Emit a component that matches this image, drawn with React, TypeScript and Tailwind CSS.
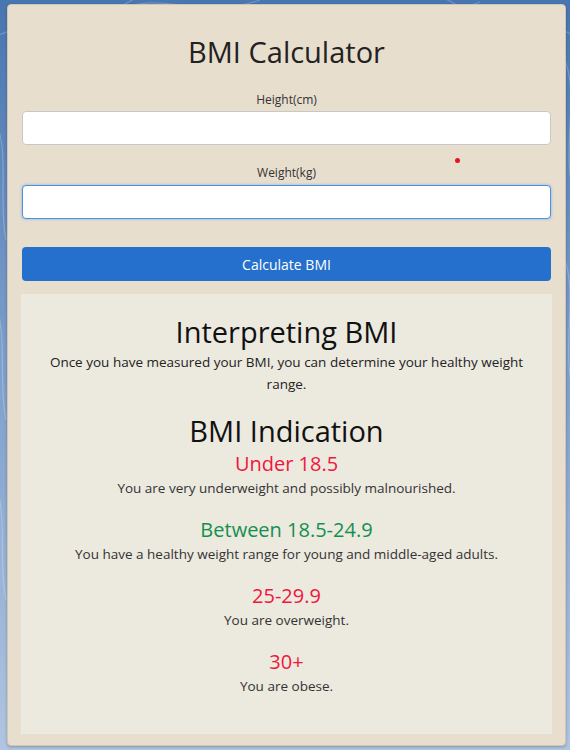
import { useState } from 'react';

type Range = { label: string; text: string; tone: 'bad' | 'good' };

const ranges: Range[] = [
  { label: 'Under 18.5', text: 'You are very underweight and possibly malnourished.', tone: 'bad' },
  { label: 'Between 18.5-24.9', text: 'You have a healthy weight range for young and middle-aged adults.', tone: 'good' },
  { label: '25-29.9', text: 'You are overweight.', tone: 'bad' },
  { label: '30+', text: 'You are obese.', tone: 'bad' },
];

const toneClass = {
  bad: 'text-[#f0173d]',
  good: 'text-[#13904f]',
};

// faint swirl lines on the page background
function Backdrop() {
  return (
    <svg className="absolute inset-0 h-full w-full" viewBox="0 0 570 750" preserveAspectRatio="none">
      <g fill="none" stroke="#ffffff" strokeOpacity="0.22" strokeWidth="1.2">
        <path d="M-10 40 C 40 10, 90 30, 140 -5" />
        <path d="M120 10 C 160 -10, 200 20, 260 0" />
        <path d="M300 12 C 360 -8, 420 25, 480 2" />
        <path d="M440 -5 C 490 30, 540 10, 580 40" />
        <path d="M-5 120 C 10 150, -2 200, 6 240" />
        <path d="M-5 300 C 8 340, -2 380, 6 420" />
        <path d="M565 60 C 580 100, 560 150, 575 200" />
        <path d="M565 260 C 578 300, 560 350, 575 400" />
        <path d="M-5 480 C 8 520, -2 560, 6 600" />
      </g>
    </svg>
  );
}

export default function App() {
  const [height, setHeight] = useState('');
  const [weight, setWeight] = useState('');

  return (
    <div
      className="relative min-h-screen w-full overflow-hidden bg-gradient-to-b from-[#4876b0] via-[#7fa0cc] to-[#b0c5e0] pt-[4px] pl-[7px]"
      style={{ fontFamily: '"Open Sans", "Noto Sans", sans-serif' }}
    >
      <Backdrop />
      <div className="relative flex h-[742px] w-[559px] flex-col rounded-[4px] border border-[#cfc6b8] bg-[#e8dece] px-[13px] pt-[29px] shadow-[0_1px_3px_rgba(0,0,0,0.25)]">
        <span className="absolute left-[447px] top-[153px] h-[5px] w-[5px] rounded-full bg-[#e8141c]" />

        <h1 className="text-center text-[29px] leading-[36px] font-normal text-[#222]">BMI Calculator</h1>

        <label className="mt-[21px] block text-center text-[12px] leading-[18px] text-[#333]">Height(cm)</label>
        <input
          value={height}
          onChange={(e) => setHeight(e.target.value)}
          className="mx-px mt-[2px] h-[34px] rounded-[4px] border border-[#c8c8c8] bg-white px-3 text-[14px] outline-none"
        />

        <label className="mt-[19px] block text-center text-[12px] leading-[18px] text-[#333]">Weight(kg)</label>
        <input
          value={weight}
          onChange={(e) => setWeight(e.target.value)}
          className="mx-px mt-[3px] h-[34px] rounded-[4px] border border-[#4a90e8] bg-white px-3 text-[14px] shadow-[0_0_3px_rgba(74,144,232,0.6)] outline-none"
        />

        <button className="mx-px mt-[28px] h-[34px] rounded-[4px] bg-[#2570cd] text-[14px] text-white">
          Calculate BMI
        </button>

        <div className="mt-[13px] flex h-[440px] flex-col items-center bg-[#ece9df] px-[24px] pt-[20px] text-center">
          <h2 className="text-[29px] leading-[36px] text-[#111]">Interpreting BMI</h2>
          <p className="mt-px text-[13.5px] leading-[22px] text-[#222]">
            Once you have measured your BMI, you can determine your healthy weight range.
          </p>

          <h2 className="mt-[18px] text-[29px] leading-[36px] text-[#111]">BMI Indication</h2>

          <div className="mt-[3px] flex flex-col items-center gap-[19px]">
            {ranges.map((r) => (
              <div key={r.label} className="flex flex-col items-center">
                <div className={`text-[20px] leading-[24px] ${toneClass[r.tone]}`}>{r.label}</div>
                <div className="mt-[1px] text-[13.5px] leading-[22px] text-[#333]">{r.text}</div>
              </div>
            ))}
          </div>
        </div>
      </div>
    </div>
  );
}
